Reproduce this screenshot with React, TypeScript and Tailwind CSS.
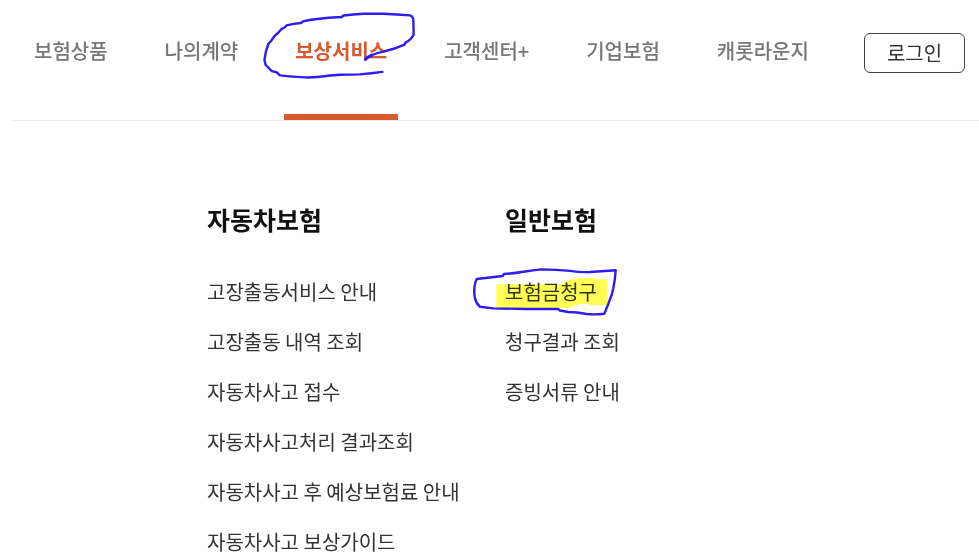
const navItems = [
    { label: '보험상품' },
    { label: '나의계약' },
    { label: '보상서비스', active: true },
    { label: '고객센터+' },
    { label: '기업보험' },
    { label: '캐롯라운지' },
];

const menus = [
    {
        title: '자동차보험',
        items: [
            '고장출동서비스 안내',
            '고장출동 내역 조회',
            '자동차사고 접수',
            '자동차사고처리 결과조회',
            '자동차사고 후 예상보험료 안내',
            '자동차사고 보상가이드',
        ],
    },
    {
        title: '일반보험',
        items: ['보험금청구', '청구결과 조회', '증빙서류 안내'],
        marked: '보험금청구',
    },
];

// Pen circle around the active tab
function TabCircle() {
    return (
        <svg
            className="pointer-events-none absolute -left-6 top-2 h-[74px] w-[160px] max-w-none"
            viewBox="260 8 160 74"
            fill="none"
            stroke="#2f1df0"
            strokeWidth="2.4"
            strokeLinecap="round"
            strokeLinejoin="round"
            aria-hidden="true"
        >
            <path d="M382.3 71.9 Q371 73.4 360 74.4 L340 74.8 Q330 75.4 320 76.7 Q312 77.6 305 77.4 Q292 77 280 75.4 L276.7 72.3 L271.7 71 L265.7 65 L264.4 60 Q265.5 51 268.3 44 L271 41 L275 35.5 L278 33 L281.5 29 L284.5 27.5 L286.7 25.3 Q293 23.6 301 23 L303 21.3 Q309 19.8 317 19 Q328 17.5 341.7 17 L343.5 15.5 Q353 14.2 363.3 13.7 L383.3 13.7 Q397 14.2 410 15.4 Q412.6 16.2 413.3 19 L413.7 34.7 Q410.5 40.5 405.5 42.6 L404.5 44.6 Q395 49 383.3 51.6 Q376 53 371.7 55.2" />
            <path d="M371.7 55.2 Q367.5 57.2 365.5 59.2" strokeWidth="3.2" />
        </svg>
    );
}

// Highlighter stroke and pen circle over a menu link
function LinkMark() {
    return (
        <svg
            className="pointer-events-none absolute -left-[37px] -top-3 h-[54px] w-[156px] max-w-none mix-blend-multiply"
            viewBox="468 265 156 54"
            fill="none"
            aria-hidden="true"
        >
            <path
                fill="#ffff55"
                d="M496.3 284.3 L562 284 L564 282 L568 280 L573 279 L581 278 L592 278 L597 279.3 L607.7 279.3 L607.7 305 L590 305 L586 304 L580 304 L574 305.5 L570 308 L496.3 308 Z"
            />
            <path
                stroke="#2f1df0"
                strokeWidth="2.4"
                strokeLinejoin="round"
                d="M476.7 279 Q490 277.5 502.7 276 L504 274 Q514 273.4 523.3 271.8 Q533 270.2 541.7 269.4 Q556 269.8 570 270.9 Q580 272.4 590 272 L615.7 270.3 Q615 280 613.3 288.3 L612 294 Q610 299 608.3 304 L604.3 313.7 Q595 314.8 586.7 314 Q577 312.2 568.3 312 L560 310.5 L558 309 L526.7 309 L493.3 308.4 L480 306.7 Q476 303.5 475 298.3 Q473.8 293 474.5 287 Q475 282 476.7 279 Z"
            />
        </svg>
    );
}

export default function App() {
    return (
        <div className="min-h-screen overflow-x-hidden bg-white font-['Noto_Sans_CJK_KR',sans-serif] text-xl leading-[30px]">
            <header className="ml-3 flex items-start justify-between border-b border-[#ebebeb] pr-3.5">
                <nav className="flex gap-[35px] pl-[11px]">
                    {navItems.map((item) => (
                        <a
                            key={item.label}
                            href="#"
                            className={
                                item.active
                                    ? 'relative whitespace-nowrap border-b-6 border-[#d65a2e] px-[11px] pb-12 pt-9 font-bold text-[#d65a2e]'
                                    : 'whitespace-nowrap border-b-6 border-transparent px-[11px] pb-12 pt-9 font-medium text-[#777]'
                            }
                        >
                            {item.label}
                            {item.active && <TabCircle />}
                        </a>
                    ))}
                </nav>
                <button
                    type="button"
                    className="mt-[33px] h-10 w-[101px] shrink-0 rounded-md border border-[#444] text-[#333]"
                >
                    로그인
                </button>
            </header>

            {/* Submenu */}
            <main className="grid grid-cols-[298px_1fr] pl-[207px] pt-20">
                {menus.map((menu) => (
                    <section key={menu.title}>
                        <h2 className="text-[25px] font-bold leading-9 text-[#111]">{menu.title}</h2>
                        <ul className="mt-10 flex flex-col gap-5">
                            {menu.items.map((item) => (
                                <li key={item} className="flex">
                                    <a href="#" className="relative whitespace-nowrap text-[#333]">
                                        {item}
                                        {item === menu.marked && <LinkMark />}
                                    </a>
                                </li>
                            ))}
                        </ul>
                    </section>
                ))}
            </main>
        </div>
    );
}
